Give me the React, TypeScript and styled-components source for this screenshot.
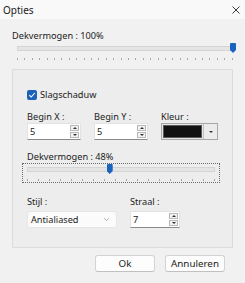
import React from "react";
import styled, { createGlobalStyle } from "styled-components";
import { ChevronDown } from "lucide-react";

const GlobalStyle = createGlobalStyle`
  html, body { margin: 0; padding: 0; }
  body {
    background: #f1f1f1;
    font-family: "Noto Sans", "Liberation Sans", sans-serif;
    font-size: 9.2px;
    color: #1b1b1b;
  }
`;

const Window = styled.div`
  width: 245px;
  height: 283px;
  display: flex;
  flex-direction: column;
  background: #f1f1f1;
  overflow: hidden;
`;

const TitleBar = styled.div`
  height: 19px;
  display: flex;
  align-items: center;
  justify-content: space-between;
  padding: 0 5px 0 3px;
  background: #f9f9f9;
  font-size: 10px;
`;

const Body = styled.div`
  flex: 1;
  display: flex;
  flex-direction: column;
  padding: 10px 12px 0 12px;
`;

const Label = styled.div<{ $mb?: number }>`
  line-height: 13px;
  white-space: nowrap;
  margin-bottom: ${(p) => p.$mb ?? 0}px;
`;

/* ---------- slider ---------- */
const SliderBox = styled.div<{ $focus?: boolean; $w: number }>`
  position: relative;
  width: ${(p) => p.$w}px;
  height: 20px;
  box-sizing: border-box;
  padding: 3px 4px 0 4px;
  border: 1px ${(p) => (p.$focus ? "dotted #6b6b6b" : "solid transparent")};
`;

const Track = styled.div`
  height: 3px;
  background: #e4e4e4;
  border: 1px solid #d4d4d4;
`;

const Ticks = styled.div<{ $step: number }>`
  height: 2px;
  margin-top: 7px;
  background: repeating-linear-gradient(
    to right,
    #a5a5a5 0 1px,
    transparent 1px ${(p) => p.$step}px
  );
`;

const Thumb = styled.div`
  position: absolute;
  top: 0px;
  width: 6px;
  height: 10px;
  margin-left: -3px;
  background: #1a64c0;
  clip-path: polygon(0 0, 100% 0, 100% 70%, 50% 100%, 0 70%);
  border-radius: 1px;
`;

const Slider: React.FC<{ value: number; width: number; step: number; focus?: boolean }> = ({
  value,
  width,
  step,
  focus,
}) => (
  <SliderBox $w={width} $focus={focus}>
    <Track />
    <Ticks $step={step} />
    <Thumb style={{ left: 4 + ((width - 10) * value) / 100 }} />
  </SliderBox>
);

/* ---------- group ---------- */
const Group = styled.div`
  margin-top: 7px;
  border: 1px solid #dcdcdc;
  background: #ededed;
  padding: 18px 14px 19px 14px;
  display: flex;
  flex-direction: column;
`;

const CheckRow = styled.label`
  display: flex;
  align-items: center;
  gap: 3px;
  line-height: 14px;
`;

const CheckBox = styled.span`
  width: 10px;
  height: 10px;
  border-radius: 2px;
  background: #1b62b8;
  display: flex;
  align-items: center;
  justify-content: center;
`;

const Row = styled.div<{ $gap: number; $mt: number }>`
  display: flex;
  gap: ${(p) => p.$gap}px;
  margin-top: ${(p) => p.$mt}px;
`;

const Stack = styled.div<{ $mt: number }>`
  display: flex;
  flex-direction: column;
  margin-top: ${(p) => p.$mt}px;
`;

const Indent = styled.div`
  margin-left: -5px;
`;

const Field = styled.div<{ $w: number }>`
  width: ${(p) => p.$w}px;
  display: flex;
  flex-direction: column;
`;

const SpinWrap = styled.div`
  height: 17px;
  display: flex;
  box-sizing: border-box;
  background: #fff;
  border: 1px solid #e2e2e2;
  border-bottom-color: #8a8a8a;
`;

const SpinValue = styled.div`
  flex: 1;
  padding-left: 2px;
  line-height: 15px;
`;

const SpinButtons = styled.div`
  width: 9px;
  display: flex;
  flex-direction: column;
  gap: 1px;
  padding: 1px 1px 1px 0;
`;

const SpinButton = styled.div<{ $down?: boolean }>`
  flex: 1;
  border: 1px solid #b9b9b9;
  background: #f1f1f1;
  display: flex;
  align-items: center;
  justify-content: center;
  &::after {
    content: "";
    border-left: 2px solid transparent;
    border-right: 2px solid transparent;
    ${(p) =>
      p.$down ? "border-top: 2px solid #333;" : "border-bottom: 2px solid #333;"}
  }
`;

const Spin: React.FC<{ value: string }> = ({ value }) => (
  <SpinWrap>
    <SpinValue>{value}</SpinValue>
    <SpinButtons>
      <SpinButton />
      <SpinButton $down />
    </SpinButtons>
  </SpinWrap>
);

const ColorPick = styled.div`
  height: 17px;
  box-sizing: border-box;
  display: flex;
  border: 1px solid #a8a8a8;
  background: #e6e6e6;
`;

const Swatch = styled.div<{ $color: string }>`
  flex: 1;
  margin: 1px;
  border: 1px solid #5a5a5a;
  background: ${(p) => p.$color};
`;

const ColorArrow = styled.div`
  width: 13px;
  border-left: 1px solid #c4c4c4;
  background: #ececec;
  display: flex;
  align-items: center;
  justify-content: center;
  &::after {
    content: "";
    border-left: 2px solid transparent;
    border-right: 2px solid transparent;
    border-top: 2px solid #333;
  }
`;

const Combo = styled.div`
  height: 17px;
  box-sizing: border-box;
  display: flex;
  align-items: center;
  justify-content: space-between;
  padding: 0 5px 0 3px;
  background: #fbfbfb;
  border: 1px solid #e6e6e6;
  border-radius: 3px;
  color: #1b1b1b;
`;

const Footer = styled.div`
  display: flex;
  justify-content: flex-end;
  gap: 10px;
  padding: 7px 8px 11px 0;
`;

const Button = styled.button`
  width: 60px;
  height: 17px;
  padding: 0;
  font-family: inherit;
  font-size: 9.8px;
  color: #1b1b1b;
  background: #fdfdfd;
  border: 1px solid #d3d3d3;
  border-bottom-color: #c0c0c0;
  border-radius: 3px;
`;

const Close = () => (
  <svg width="8" height="8" viewBox="0 0 8 8">
    <path d="M0.5 0.5 L7.5 7.5 M7.5 0.5 L0.5 7.5" stroke="#222" strokeWidth="0.9" />
  </svg>
);

export default function App() {
  return (
    <Window>
      <GlobalStyle />
      <TitleBar>
        <span>Opties</span>
        <Close />
      </TitleBar>
      <Body>
        <Label>Dekvermogen : 100%</Label>
        <Slider value={100} width={226} step={7.4} />
        <Group>
          <CheckRow>
            <CheckBox>
              <svg width="8" height="8" viewBox="0 0 8 8">
                <path d="M1.3 4.2 L3.2 6 L6.8 2" stroke="#fff" strokeWidth="1.1" fill="none" />
              </svg>
            </CheckBox>
            Slagschaduw
          </CheckRow>
          <Row $gap={13} $mt={8}>
            <Field $w={55}>
              <Label>Begin X :</Label>
              <Spin value="5" />
            </Field>
            <Field $w={55}>
              <Label>Begin Y :</Label>
              <Spin value="5" />
            </Field>
            <Field $w={58}>
              <Label>Kleur :</Label>
              <ColorPick>
                <Swatch $color="#111" />
                <ColorArrow />
              </ColorPick>
            </Field>
          </Row>
          <Stack $mt={10}>
            <Label>Dekvermogen : 48%</Label>
            <Indent>
              <Slider value={44} width={198} step={11} focus />
            </Indent>
          </Stack>
          <Row $gap={13} $mt={12}>
            <Field $w={90}>
              <Label $mb={3}>Stijl :</Label>
              <Combo>
                Antialiased
                <ChevronDown size={9} strokeWidth={1.2} color="#555" />
              </Combo>
            </Field>
            <Field $w={50}>
              <Label $mb={3}>Straal :</Label>
              <Spin value="7" />
            </Field>
          </Row>
        </Group>
        <Footer>
          <Button>Ok</Button>
          <Button>Annuleren</Button>
        </Footer>
      </Body>
    </Window>
  );
}
